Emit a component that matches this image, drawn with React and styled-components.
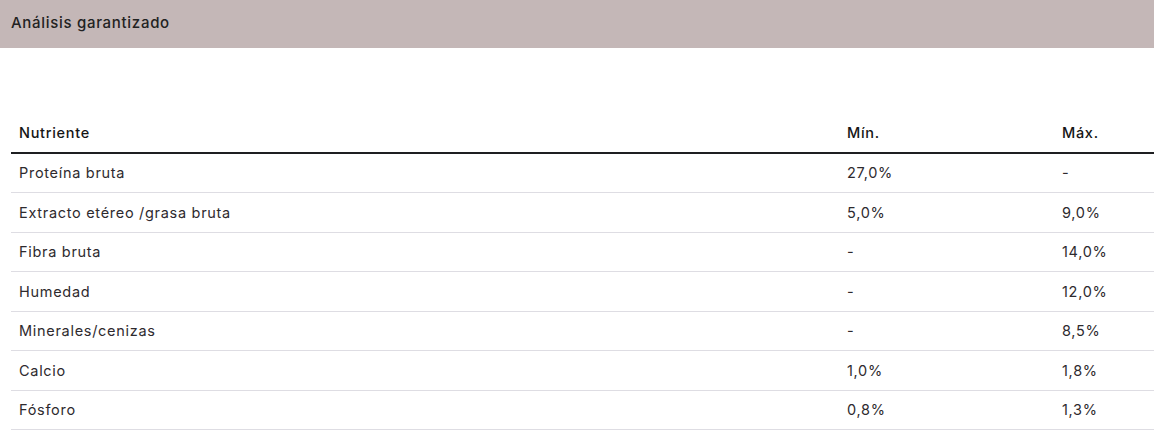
import styled, { createGlobalStyle } from "styled-components";

const rows = [
  ["Proteína bruta", "27,0%", "-"],
  ["Extracto etéreo /grasa bruta", "5,0%", "9,0%"],
  ["Fibra bruta", "-", "14,0%"],
  ["Humedad", "-", "12,0%"],
  ["Minerales/cenizas", "-", "8,5%"],
  ["Calcio", "1,0%", "1,8%"],
  ["Fósforo", "0,8%", "1,3%"],
];

function App() {
  return (
    <Page>
      <GlobalStyle />
      <TitleBar>
        <Title>Análisis garantizado</Title>
      </TitleBar>
      <TableWrap>
        <Table>
          <colgroup>
            <col style={{ width: 828 }} />
            <col style={{ width: 215 }} />
            <col style={{ width: 100 }} />
          </colgroup>
          <thead>
            <tr>
              <HeadCell>Nutriente</HeadCell>
              <HeadCell>Mín.</HeadCell>
              <HeadCell>Máx.</HeadCell>
            </tr>
          </thead>
          <tbody>
            {rows.map((r) => (
              <tr key={r[0]}>
                <Cell>{r[0]}</Cell>
                <Cell>{r[1]}</Cell>
                <Cell>{r[2]}</Cell>
              </tr>
            ))}
          </tbody>
        </Table>
      </TableWrap>
    </Page>
  );
}

const GlobalStyle = createGlobalStyle`
  body {
    margin: 0;
    background: #ffffff;
    font-family: Inter, "DejaVu Sans", sans-serif;
    color: #2a2a2a;
  }
`;

const Page = styled.div`
  width: 1154px;
  overflow: hidden;
`;

const TitleBar = styled.div`
  height: 48px;
  background: #c4b7b7;
  display: flex;
  align-items: center;
  padding: 0 11px;
  box-sizing: border-box;
`;

const Title = styled.h3`
  margin: 0 0 4px 0;
  font-size: 15px;
  font-weight: 500;
  letter-spacing: 0.7px;
  color: #222222;
`;

const TableWrap = styled.div`
  padding: 65px 0 0 11px;
`;

const Table = styled.table`
  width: 1143px;
  border-collapse: collapse;
  table-layout: fixed;
  font-size: 14.5px;
  letter-spacing: 0.7px;
`;

const HeadCell = styled.th`
  text-align: left;
  font-weight: 500;
  color: #151515;
  padding: 0 8px;
  height: 38.5px;
  border-bottom: 2px solid #1e1f21;
`;

const Cell = styled.td`
  padding: 0 8px;
  height: 38.5px;
  color: #2e2a2e;
  border-bottom: 1px solid #dedde3;
`;

export default App;
